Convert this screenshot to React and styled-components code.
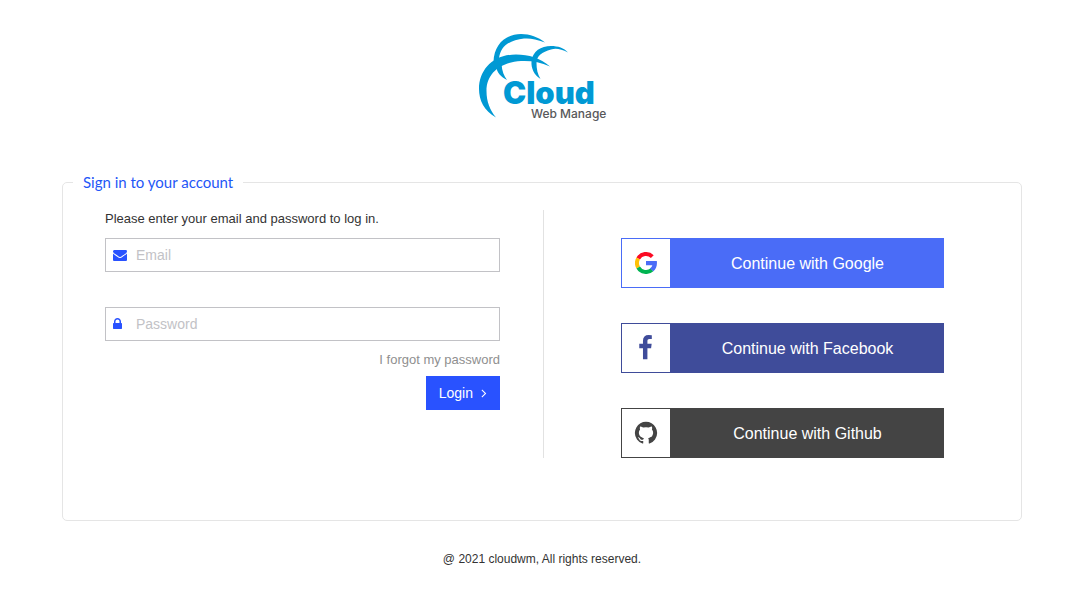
import React from "react";
import styled, { createGlobalStyle } from "styled-components";

const GlobalStyle = createGlobalStyle`
  *, *::before, *::after { box-sizing: border-box; }
  body {
    margin: 0;
    background: #fff;
    color: #333;
    font-family: "Liberation Sans", Arial, sans-serif;
    font-size: 13px;
    line-height: 16px;
  }
`;

const Page = styled.div`
  display: flex;
  flex-direction: column;
  align-items: center;
  padding: 34px 54px 40px 62px;
`;

const Header = styled.header`
  display: flex;
  margin-bottom: 52px;
`;

const LogoSvg = styled.svg`
  display: block;
  overflow: visible;
`;

const Panel = styled.fieldset`
  width: 100%;
  max-width: 960px;
  min-width: 0;
  margin: 0;
  padding: 18px 0 62px;
  border: 1px solid #e5e5e5;
  border-radius: 5px;
`;

const Legend = styled.legend`
  margin-left: 10px;
  padding: 0 10px;
  color: #1f57f7;
  font-family: Lato, sans-serif;
  font-size: 15px;
  line-height: 20px;
`;

const Columns = styled.div`
  display: grid;
  grid-template-columns: 480fr 478fr;
`;

const LoginForm = styled.form`
  display: flex;
  flex-direction: column;
  padding: 0 43px 0 42px;
`;

const Intro = styled.p`
  margin: 0 0 10px;
  line-height: 18px;
`;

const Field = styled.label`
  display: flex;
  align-items: center;
  gap: 9px;
  height: 34px;
  padding: 0 7px;
  border: 1px solid #c2c2c6;
  margin-bottom: ${(p) => (p.$last ? "10px" : "35px")};
`;

const IconSlot = styled.span`
  display: flex;
  width: 14px;
  color: #2952ff;
`;

const Input = styled.input`
  flex: 1;
  min-width: 0;
  padding: 0;
  border: 0;
  outline: 0;
  background: transparent;
  color: #333;
  font: 14px/20px "Liberation Sans", Arial, sans-serif;
  &::placeholder { color: #c2c2c6; opacity: 1; }
`;

const ForgotLink = styled.a`
  align-self: flex-end;
  margin-bottom: 7px;
  color: #8f8f8f;
  line-height: 18px;
  text-decoration: none;
`;

const LoginButton = styled.button`
  display: flex;
  align-items: center;
  align-self: flex-end;
  gap: 4px;
  height: 34px;
  padding: 0 9px 0 13px;
  border: 0;
  background: #2952ff;
  color: #fff;
  font: 14px/20px "Liberation Sans", Arial, sans-serif;
  cursor: pointer;
`;

const SocialList = styled.div`
  display: flex;
  flex-direction: column;
  gap: 35px;
  padding: 28px 77px 0;
  border-left: 1px solid #e2e2e2;
`;

const SocialButton = styled.button`
  display: flex;
  height: 50px;
  padding: 0;
  border: 1px solid ${(p) => p.$color};
  background: ${(p) => p.$color};
  color: #fff;
  font: 16px/20px "Liberation Sans", Arial, sans-serif;
  cursor: pointer;
`;

const SocialIcon = styled.span`
  display: flex;
  align-items: center;
  justify-content: center;
  width: 48px;
  height: 48px;
  background: #fff;
  color: ${(p) => p.$color};
`;

const SocialLabel = styled.span`
  flex: 1;
  align-self: center;
  padding: 2px 0 0 2px;
  text-align: center;
`;

const Footer = styled.footer`
  margin-top: 30px;
  font-size: 12px;
`;

const ICONS = {
  envelope:
    "M1792 710v794q0 66-47 113t-113 47h-1472q-66 0-113-47t-47-113v-794q44 49 101 87 362 246 497 345 57 42 92.5 65.5t94.5 48 110 24.5h2q51 0 110-24.5t94.5-48 92.5-65.5q170-123 498-345 57-39 100-87zm0-294q0 79-49 151t-122 123q-376 261-468 325-10 7-42.5 31t-54 38.5-52 32.5-57.5 27-50 9h-2q-23 0-50-9t-57.5-27-52-32.5-54-38.5-42.5-31q-91-64-262-182.5t-205-142.5q-62-42-117-115.5t-55-136.5q0-78 41.5-130t118.5-52h1472q65 0 112.5 47t47.5 113z",
  lock:
    "M640 768h512v-192q0-106-75-181t-181-75-181 75-75 181v192zm832 96v576q0 40-28 68t-68 28h-960q-40 0-68-28t-28-68v-576q0-40 28-68t68-28h32v-192q0-184 132-316t316-132 316 132 132 316v192h32q40 0 68 28t28 68z",
  angle:
    "M1171 960q0 13-10 23l-466 466q-10 10-23 10t-23-10l-50-50q-10-10-10-23t10-23l393-393-393-393q-10-10-10-23t10-23l50-50q10-10 23-10t23 10l466 466q10 10 10 23z",
  facebook:
    "M1343 12v264h-157q-86 0-116 36t-30 108v189h293l-39 296h-254v759h-306v-759h-255v-296h255v-218q0-186 104-288.5t277-102.5q147 0 228 12z",
  github:
    "M896 128q209 0 385.5 103t279.5 279.5 103 385.5q0 251-146.5 451.5t-378.5 277.5q-27 5-40-7t-13-30q0-3 .5-76.5t.5-134.5q0-97-52-142 57-6 102.5-18t94-39 81-66.5 53-105 20.5-150.5q0-119-79-206 37-91-8-204-28-9-81 11t-92 44l-38 24q-93-26-192-26t-192 26q-16-11-42.5-27t-83.5-38.5-85-13.5q-45 113-8 204-79 87-79 206 0 85 20.5 150t52.5 105 80.5 67 94 39 102.5 18q-39 36-49 103-21 10-45 15t-57 5-65.5-21.5-55.5-62.5q-19-32-48.5-52t-49.5-24l-20-3q-21 0-29 4.5t-5 11.5 9 14 13 12l7 5q22 10 43.5 38t31.5 51l10 23q13 38 44 61.5t67 30 69.5 7 55.5-3.5l23-4q0 38 .5 88.5t.5 54.5q0 18-13 30t-40 7q-232-77-378.5-277.5t-146.5-451.5q0-209 103-385.5t279.5-279.5 385.5-103z",
};

function Icon({ name, size, box = "0 0 1792 1792", width = size }) {
  return (
    <svg width={width} height={size} viewBox={box} fill="currentColor" aria-hidden="true">
      <path d={ICONS[name]} />
    </svg>
  );
}

function GoogleIcon() {
  return (
    <svg width="22" height="22" viewBox="0 0 22 22" fill="none" strokeWidth="4" aria-hidden="true">
      <path stroke="#fb0b24" d="M3.200 6.500A9 9 0 0 1 17.300 4.600" />
      <path stroke="#ffc107" d="M3.200 15.500A9 9 0 0 1 3.200 6.500" />
      <path stroke="#00b451" d="M17 17.700A9 9 0 0 1 3.200 15.500" />
      <path fill="#4a6cf7" d="M11 9H21.800C22.400 13 21.200 17 18.300 19.300L14.900 16.500C16.200 15.700 17 14.600 17.300 13.300H11Z" />
    </svg>
  );
}

function Logo() {
  return (
    <LogoSvg width="126" height="86" viewBox="0 0 126 86" role="img" aria-label="Cloud Web Manage">
      <g fill="#0099d4">
        <path d="M17 83.500C5 77 0 66 0 55C0 36 14 20.500 37 20.500C50 20.500 61 24 71 32.500C61 28 52 26.500 42 27C23 28 7.500 38 7.500 57C7.500 68 11 76 17 83.500Z" />
        <path d="M14.500 28C15 10 27 0 42 0C51 0 59 3 66 8.500C57 5 51 4 45 4.500C31 6 21 12 20 25Z" />
        <path d="M17 32L22.500 30C23 37 25 42 28 46C22 43 18 39 17 32Z" />
        <path d="M89 18.500C82 15 77 14 72 15.500C63 18 57.500 22 57.500 29C57.500 35 58.500 40 61.500 45C55 41 52 34 52.500 27.500C53.500 17 62 12 72 12C79 12 85 14 89 18.500Z" />
      </g>
      <text x="24" y="70" fill="#0099d4" fontFamily="Inter, sans-serif" fontSize="31" fontWeight="900">Cloud</text>
      <text x="52" y="84" fill="#58585a" fontFamily="Inter, sans-serif" fontSize="12" fontWeight="500">Web Manage</text>
    </LogoSvg>
  );
}

const PROVIDERS = [
  { label: "Continue with Google", color: "#4a6cf7", icon: <GoogleIcon /> },
  { label: "Continue with Facebook", color: "#3f4c9a", icon: <Icon name="facebook" size={26} width={14} box="460 0 965 1792" /> },
  { label: "Continue with Github", color: "#444444", icon: <Icon name="github" size={26} /> },
];

export default function App() {
  return (
    <>
      <GlobalStyle />
      <Page>
        <Header>
          <Logo />
        </Header>
        <Panel>
          <Legend>Sign in to your account</Legend>
          <Columns>
            <LoginForm onSubmit={(e) => e.preventDefault()}>
              <Intro>Please enter your email and password to log in.</Intro>
              <Field>
                <IconSlot><Icon name="envelope" size={14} /></IconSlot>
                <Input type="email" placeholder="Email" aria-label="Email" />
              </Field>
              <Field $last>
                <IconSlot><Icon name="lock" size={14} width={9} box="320 0 1152 1792" /></IconSlot>
                <Input type="password" placeholder="Password" aria-label="Password" />
              </Field>
              <ForgotLink href="#forgot">I forgot my password</ForgotLink>
              <LoginButton type="submit">
                Login
                <Icon name="angle" size={14} />
              </LoginButton>
            </LoginForm>
            <SocialList>
              {PROVIDERS.map(({ label, color, icon }) => (
                <SocialButton key={label} type="button" $color={color}>
                  <SocialIcon $color={color}>{icon}</SocialIcon>
                  <SocialLabel>{label}</SocialLabel>
                </SocialButton>
              ))}
            </SocialList>
          </Columns>
        </Panel>
        <Footer>@ 2021 cloudwm, All rights reserved.</Footer>
      </Page>
    </>
  );
}
